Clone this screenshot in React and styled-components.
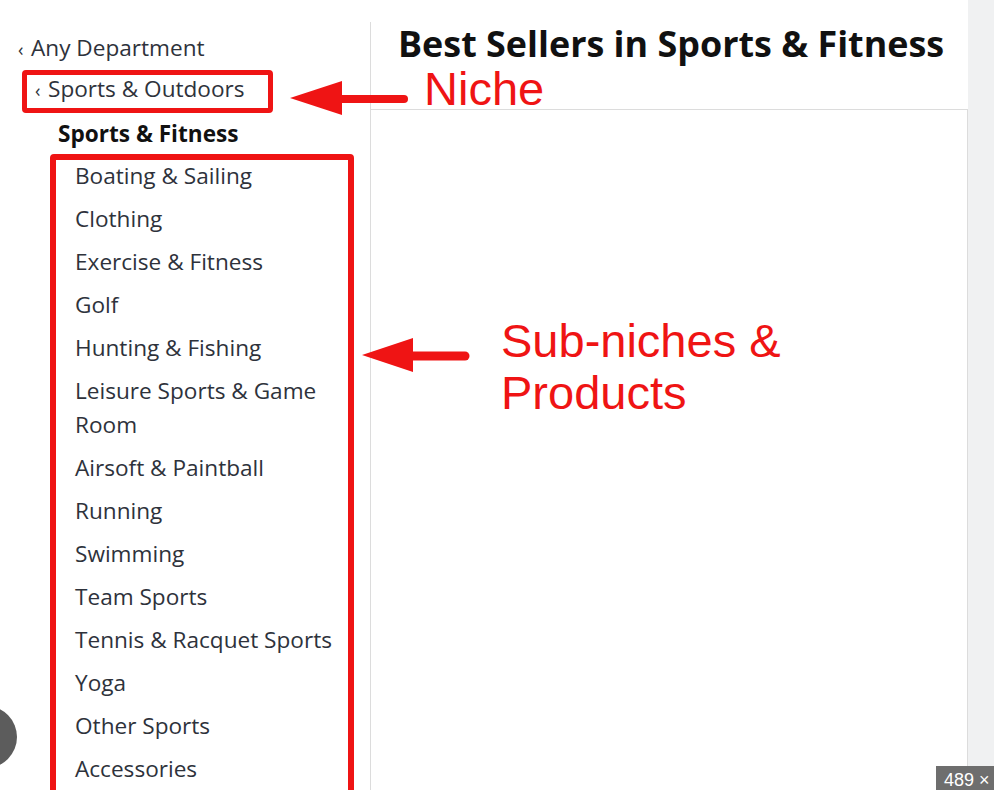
import React from "react";
import styled, { createGlobalStyle } from "styled-components";

const Global = createGlobalStyle`
html, body {
  margin: 0;
  padding: 0;
  background: #fff;
  overflow: hidden;
}
body {
  font-family: "Open Sans", "Liberation Sans", sans-serif;
}
`;

const Page = styled.div`
position: relative;
display: flex;
width: 994px;
height: 790px;
overflow: hidden;
`;

const Sidebar = styled.nav`
width: 370px;
flex: none;
padding-top: 34px;
box-sizing: border-box;
color: #2e323b;
font-size: 22.6px;
line-height: 28px;
`;

const Back = styled.div`
padding-left: 18px;
white-space: nowrap;
`;

const Chevron = styled.span`
display: inline-block;
width: 13px;
font-size: 18px;
`;

const NicheBox = styled.div`
margin: 7px 0 0 22px;
width: 251px;
box-sizing: border-box;
border: 5px solid #ef1414;
border-radius: 4px;
padding: 0 0 4px 8px;
white-space: nowrap;
`;

const Current = styled.div`
margin: 7px 0 0 58px;
font-weight: 700;
color: #111;
`;

const SubBox = styled.div`
margin: 6px 0 0 50px;
width: 304px;
height: 700px;
box-sizing: border-box;
border: 6px solid #ef1414;
border-radius: 4px;
padding-left: 19px;
`;

const List = styled.ul`
list-style: none;
margin: -1px 0 0;
padding: 0;
width: 272px;
display: flex;
flex-direction: column;
gap: 9px;
`;

const Item = styled.li`
line-height: 34px;
`;

const Main = styled.main`
flex: none;
width: 597px;
margin-top: 22px;
border-left: 1px solid #dcdcdc;
display: flex;
flex-direction: column;
`;

const Header = styled.header`
height: 88px;
box-sizing: border-box;
border-bottom: 1px solid #dcdcdc;
padding: 2px 0 0 27px;
`;

const Title = styled.h1`
margin: 0;
font-size: 35.9px;
line-height: 40px;
font-weight: 700;
color: #111;
white-space: nowrap;
`;

const Content = styled.section`
flex: 1;
border-right: 1px solid #dcdcdc;
`;

const Gutter = styled.div`
flex: 1;
background: #f0f1f2;
`;

const Note = styled.div`
position: absolute;
left: ${(p) => p.x}px;
top: ${(p) => p.y}px;
font-family: "Liberation Sans", Arial, sans-serif;
font-size: 47px;
line-height: ${(p) => p.lh || 52}px;
color: #ef1414;
white-space: nowrap;
`;

const ArrowSvg = styled.svg`
position: absolute;
left: ${(p) => p.x}px;
top: ${(p) => p.y}px;
overflow: visible;
`;

const Dot = styled.div`
position: absolute;
left: -45px;
top: 706px;
width: 62px;
height: 62px;
border-radius: 50%;
background: #5c5c5c;
`;

const SizeTag = styled.div`
position: absolute;
right: 0;
bottom: 0;
width: 58px;
height: 24px;
background: #6e6e6e;
color: #fff;
font-family: "Liberation Sans", Arial, sans-serif;
font-size: 18px;
line-height: 28px;
padding-left: 8px;
box-sizing: border-box;
white-space: nowrap;
overflow: hidden;
`;

function Arrow({ x, y, len, head, thick }) {
  // tip sits at the left end, pointing left
  return (
    <ArrowSvg x={x} y={y - 20} width={len} height={40}>
      <line x1={head - 2} y1={21} x2={len - 4} y2={21} stroke="#ef1414" strokeWidth={thick} strokeLinecap="round" />
      <polygon points={`0,20 ${head},3 ${head},37`} fill="#ef1414" />
    </ArrowSvg>
  );
}

const subs = [
  "Boating & Sailing",
  "Clothing",
  "Exercise & Fitness",
  "Golf",
  "Hunting & Fishing",
  "Leisure Sports & Game Room",
  "Airsoft & Paintball",
  "Running",
  "Swimming",
  "Team Sports",
  "Tennis & Racquet Sports",
  "Yoga",
  "Other Sports",
  "Accessories",
];

export default function App() {
  return (
    <Page>
      <Global />
      <Sidebar>
        <Back>
          <Chevron>‹</Chevron>Any Department
        </Back>
        <NicheBox>
          <Chevron>‹</Chevron>Sports &amp; Outdoors
        </NicheBox>
        <Current>Sports &amp; Fitness</Current>
        <SubBox>
          <List>
            {subs.map((s) => (
              <Item key={s}>{s}</Item>
            ))}
          </List>
        </SubBox>
      </Sidebar>
      <Main>
        <Header>
          <Title>Best Sellers in Sports &amp; Fitness</Title>
        </Header>
        <Content />
      </Main>
      <Gutter />

      <Arrow x={290} y={98} len={118} head={52} thick={8} />
      <Arrow x={362} y={355} len={107} head={51} thick={9} />
      <Note x={424} y={65} lh={48}>Niche</Note>
      <Note x={501} y={315}>
        Sub-niches &amp;
        <br />
        Products
      </Note>
      <Dot />
      <SizeTag>489 ×</SizeTag>
    </Page>
  );
}
